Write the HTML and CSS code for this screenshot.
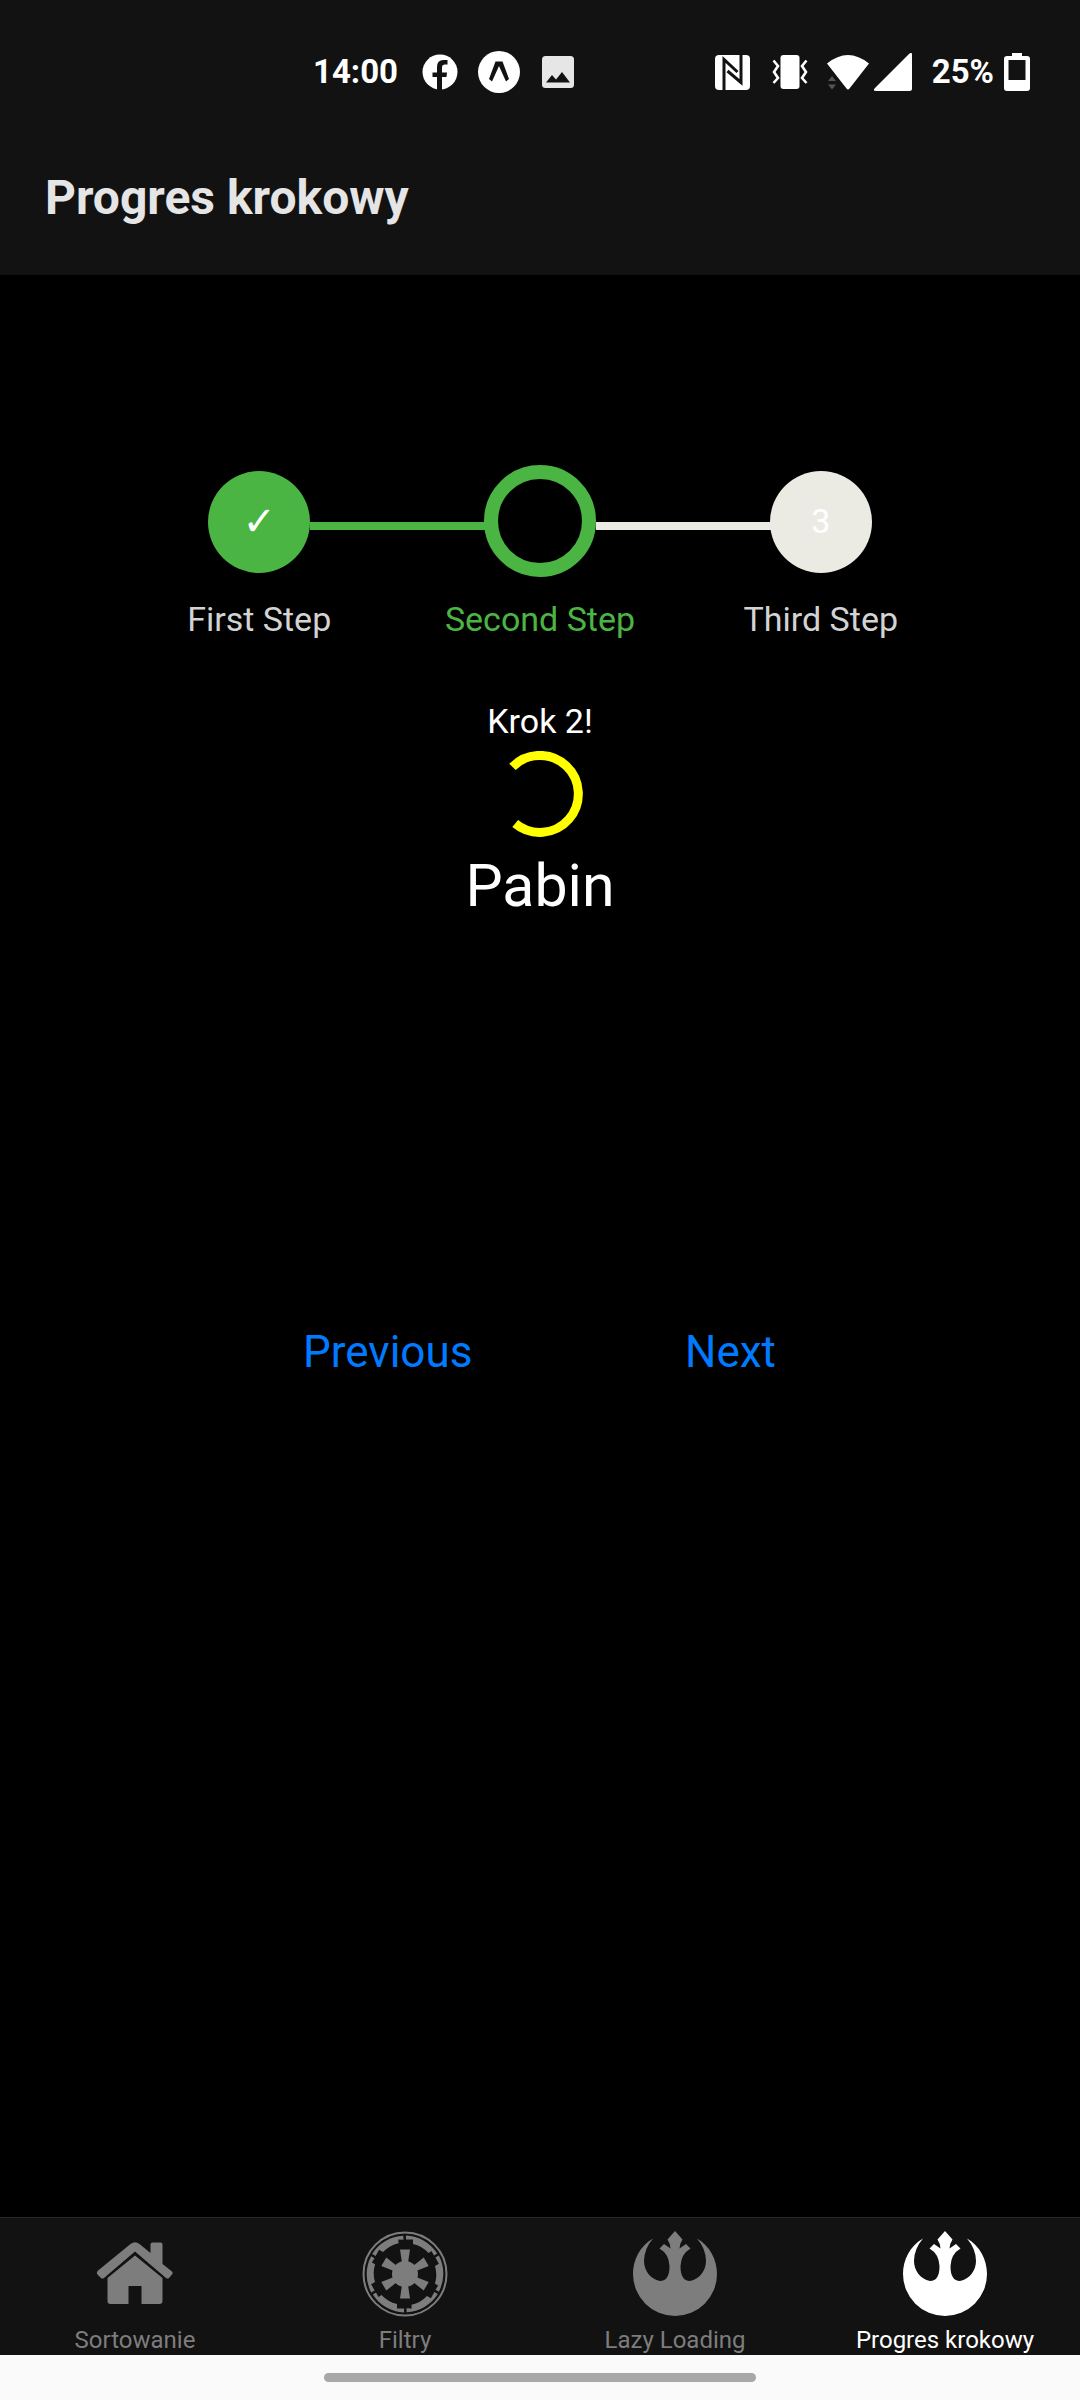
FILE: index.html
```html
<!DOCTYPE html>
<html lang="pl">
<head>
<meta charset="utf-8">
<meta name="viewport" content="width=device-width, initial-scale=1">
<title>Progres krokowy</title>
<link rel="stylesheet" href="styles.css">
</head>
<body>
<div class="status">
  <div class="status-left">
    <span class="clock">14:00</span>
    <svg class="ico-fb" width="36" height="40" viewBox="0 0 36 40" aria-hidden="true"><circle cx="18" cy="20" r="17.5" fill="#fff"/><path d="M15 40V25h-4.500v-4.500H15V15q0-7 6.500-7h4v4.500h-2.500q-3 0-3 3v5h5L24.500 25H20v15z" fill="#121212"/></svg>
    <svg class="ico-expo" width="42" height="42" viewBox="0 0 42 42" aria-hidden="true"><circle cx="21" cy="21" r="21" fill="#fff"/><path d="M17.500 10.500h7L31 28l-3 2.500L21 15 14 30.500 11 28z" fill="#121212"/></svg>
    <svg class="ico-photo" width="32" height="32" viewBox="0 0 32 32" aria-hidden="true"><rect width="32" height="32" rx="3.500" fill="#e6e6e6"/><path d="M4 26.500l6-7.500 4 4.500 6-7.500 8 10.500z" fill="#121212"/></svg>
  </div>
  <div class="status-right">
    <svg class="ico-nfc" width="35" height="35" viewBox="0 0 35 35" aria-hidden="true"><rect width="35" height="35" rx="4" fill="#fff"/><path d="M9 35V4.500L22.500 17M26 0v27.500L12.500 16" fill="none" stroke="#121212" stroke-width="3"/></svg>
    <svg class="ico-vib" width="36" height="34" viewBox="0 0 36 34" aria-hidden="true"><rect x="8.500" width="19" height="34" rx="3" fill="#fff"/><path d="M1.500 5.500l4.500 5.500-4 6 4 6-4.500 5M34.500 5.500L30 11l4 6-4 6 4.500 5" fill="none" stroke="#fff" stroke-width="2.600"/></svg>
    <svg class="ico-wifi" width="42" height="35" viewBox="0 0 42 35" aria-hidden="true"><path d="M0 8.500Q21-8.500 42 8.500L22.500 33.500q-1.500 2-3 0z" fill="#fff"/><path d="M1 26l4-5 4 5zM1 29.500h8l-4 5z" fill="#555"/></svg>
    <svg class="ico-cell" width="38" height="38" viewBox="0 0 38 38" aria-hidden="true"><path d="M35 1q3-3 3 1v33.500q0 2.500-2.500 2.500H2q-4 0-1-3z" fill="#fff"/></svg>
    <span class="percent">25%</span>
    <svg width="26" height="38" viewBox="0 0 26 38" aria-hidden="true"><path fill-rule="evenodd" d="M8 0h10v3h5q3 0 3 3v29q0 3-3 3H3q-3 0-3-3V6q0-3 3-3h5zM4.500 7v20h17V7z" fill="#fff"/></svg>
  </div>
</div>
<header class="header"><h1>Progres krokowy</h1></header>
<main class="content">
  <ol class="steps">
    <li class="step step-done"><span class="dot">✓</span><span class="label">First Step</span></li>
    <li class="step step-active"><span class="dot"></span><span class="label">Second Step</span></li>
    <li class="step"><span class="dot">3</span><span class="label">Third Step</span></li>
  </ol>
  <section class="panel">
    <p class="message">Krok 2!</p>
    <svg class="spinner" width="86" height="86" viewBox="0 0 86 86" role="img" aria-label="Loading"><path d="M15.500 15.800A38.500 38.500 0 1 1 18.200 72.500" fill="none" stroke="#ff0" stroke-width="9"/></svg>
    <p class="name">Pabin</p>
  </section>
  <div class="actions">
    <button type="button">Previous</button>
    <button type="button">Next</button>
  </div>
</main>
<nav class="tabs">
  <a href="#sortowanie" class="tab">
    <svg width="86" height="86" viewBox="0 0 86 86" fill="currentColor" aria-hidden="true"><path d="M5.500 43.500Q4 42 5.500 40L38.500 13q4.500-3.500 9 0l11 9V13.500q0-2 2-2h8q2 0 2 2V33l9.500 7.500q1.500 1.500 0 3l-3 3.500q-1.500 1-3 0L43 20.500 12 47q-1.500 1-3 0z"/><path d="M43 24.500L70.500 47v23q0 3-3 3h-18V55h-13v18h-18q-3 0-3-3V47z"/></svg>
    <span>Sortowanie</span>
  </a>
  <a href="#filtry" class="tab">
    <svg width="86" height="86" viewBox="-43 -43 86 86" fill="currentColor" aria-hidden="true">
      <circle r="41.500" fill="none" stroke="currentColor" stroke-width="2"/>
      <circle r="13"/>
      <g id="spoke"><path d="M-5-24.500H5L3-11H-3z"/><path d="M1-38.500A38.500 38.500 0 0 1 32.200-20.500L29-18.500 26.500-23 23.500-21A31 31 0 0 0 8-30V-34.500H1z"/></g>
      <use href="#spoke" transform="rotate(60)"/><use href="#spoke" transform="rotate(120)"/><use href="#spoke" transform="rotate(180)"/><use href="#spoke" transform="rotate(240)"/><use href="#spoke" transform="rotate(300)"/>
    </svg>
    <span>Filtry</span>
  </a>
  <a href="#lazy" class="tab">
    <svg width="86" height="86" viewBox="0 0 86 86" fill="currentColor" aria-hidden="true"><path id="rebel" d="M43 0L50.500 8.500Q47.500 13 47.500 17.500L54 13 58.500 17.500Q49 23 48.500 35 48.500 50 58 50C68 48 74 39 74 30Q74 18 65 7.500C78 15 85 29 85 43A42 42 0 0 1 1 43C1 29 8 15 21 7.500Q12 18 12 30C12 39 18 48 28 50Q37.500 50 37.500 35 37 23 27.500 17.500L32 13 38.500 17.500Q38.500 13 35.500 8.500z"/></svg>
    <span>Lazy Loading</span>
  </a>
  <a href="#progres" class="tab tab-current" aria-current="page">
    <svg width="86" height="86" viewBox="0 0 86 86" fill="currentColor" aria-hidden="true"><use href="#rebel"/></svg>
    <span>Progres krokowy</span>
  </a>
</nav>
<div class="gesture"><span></span></div>
</body>
</html>
```
FILE: styles.css
```css
* { box-sizing: border-box; }
body {
  margin: 0;
  min-height: 100vh;
  display: flex;
  flex-direction: column;
  background: #000;
  color: #fff;
  font-family: Roboto, "Liberation Sans", sans-serif;
}
h1, p, ol { margin: 0; padding: 0; }
svg { display: block; flex: none; }

.status {
  height: 144px;
  padding: 0 50px 0 313px;
  display: flex;
  align-items: center;
  justify-content: space-between;
  background: #121212;
  font-size: 33px;
  line-height: 40px;
  font-weight: 700;
}
.status-left, .status-right { display: flex; align-items: center; }
.ico-fb { margin-left: 24px; }
.ico-expo { margin-left: 20px; }
.ico-photo { margin-left: 22px; }
.ico-vib { margin-left: 22px; }
.ico-wifi { margin-left: 19px; }
.ico-cell { margin-left: 5px; }
.percent { margin: 0 10px 0 20px; }

.header { padding: 26px 45px 49px; background: #121212; }
.header h1 { font-size: 48px; line-height: 56px; font-weight: 700; color: #e5e5e5; }

.content { flex: 1; display: flex; flex-direction: column; }
.steps {
  display: grid;
  grid-template-columns: repeat(3, 1fr);
  width: 78%;
  margin: 190px auto 0;
  list-style: none;
}
.step {
  position: relative;
  display: flex;
  flex-direction: column;
  align-items: center;
  gap: 21px;
}
.dot {
  width: 102px;
  height: 102px;
  margin: 6px 0 5px;
  border-radius: 50%;
  display: flex;
  align-items: center;
  justify-content: center;
  background: #ebebe4;
  font-size: 34px;
  line-height: 40px;
  padding-bottom: 2px;
}
.step-done .dot {
  background: #4bb543;
  font-family: "DejaVu Sans", sans-serif;
  font-size: 40px;
  font-weight: 700;
}
.step-active .dot {
  width: 112px;
  height: 112px;
  margin: 0 0 1px;
  border: 14px solid #4bb543;
  background: #000;
}
.step + .step::before {
  content: "";
  position: absolute;
  top: 57px;
  right: calc(50% + 50px);
  width: calc(100% - 106px);
  height: 8px;
  background: #ebebe4;
}
.step + .step-active::before { right: calc(50% + 55px); background: #4bb543; }
.label { font-size: 34px; line-height: 40px; color: #d3d3d3; }
.step-active .label { color: #4bb543; }

.panel {
  margin-top: 62px;
  min-height: 480px;
  display: flex;
  flex-direction: column;
  align-items: center;
}
.message { font-size: 34px; line-height: 40px; }
.spinner { margin-top: 10px; }
.name { margin-top: 14px; font-size: 59px; line-height: 70px; }

.actions {
  display: flex;
  justify-content: space-between;
  width: 60%;
  margin: 144px auto 0;
  padding: 0 88px 0 87px;
}
.actions button {
  padding: 0;
  border: 0;
  background: none;
  color: #007aff;
  font: 44px/54px Roboto, "Liberation Sans", sans-serif;
}

.tabs {
  display: grid;
  grid-template-columns: repeat(4, 1fr);
  padding-top: 13px;
  border-top: 1px solid #272729;
  background: #121212;
}
.tab {
  display: flex;
  flex-direction: column;
  align-items: center;
  gap: 8px;
  color: #7d7d7d;
  text-decoration: none;
  font-size: 24px;
  line-height: 30px;
}
.tab-current { color: #fff; }

.gesture { height: 45px; padding-top: 18px; background: #fafafa; }
.gesture span {
  display: block;
  width: 40%;
  height: 9px;
  margin: 0 auto;
  border-radius: 5px;
  background: #a8a8a8;
}
```
